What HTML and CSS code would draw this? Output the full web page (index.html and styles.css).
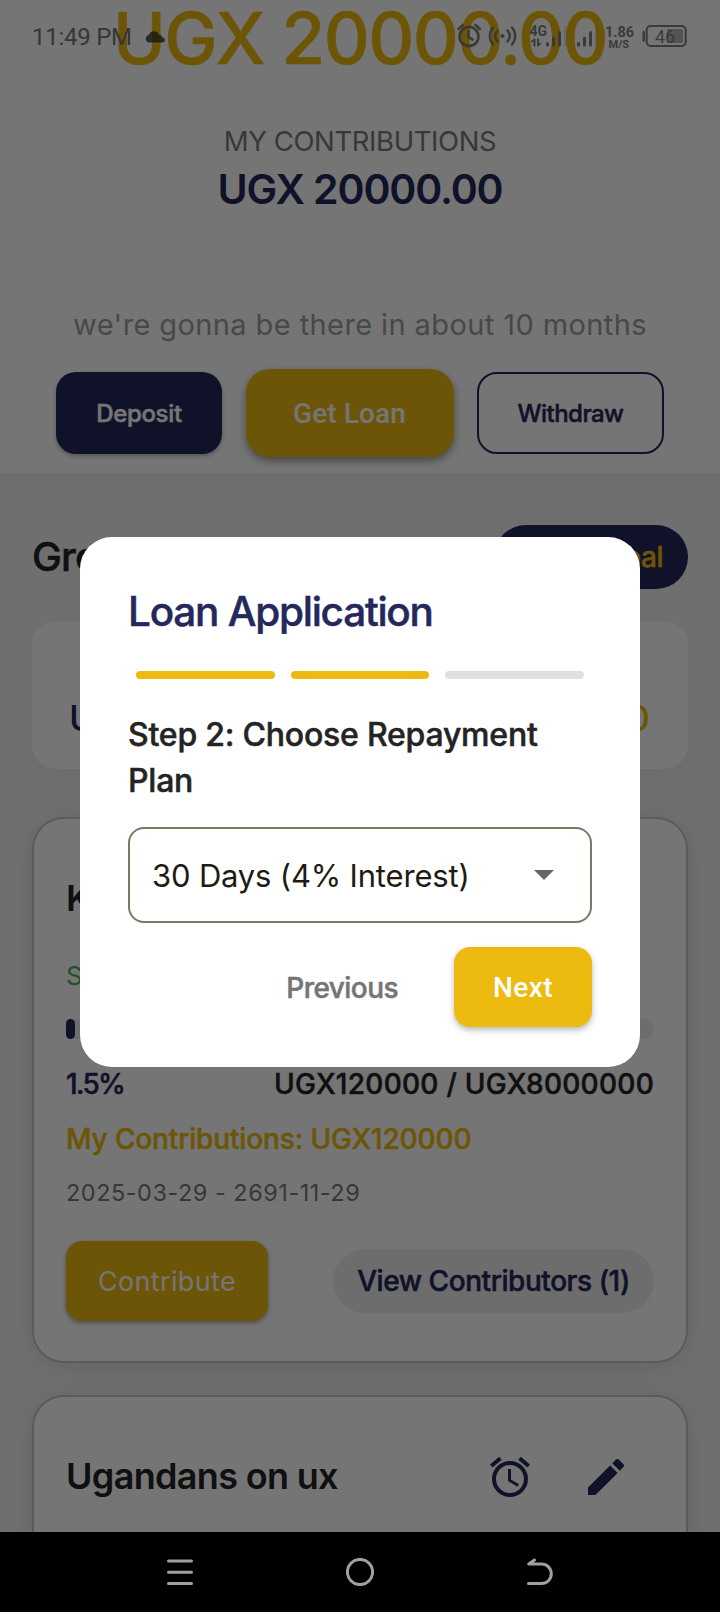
FILE: index.html
```html
<!DOCTYPE html>
<html lang="en">
<head>
<meta charset="utf-8">
<title>Loan Application</title>
<link rel="stylesheet" href="styles.css">
</head>
<body>
<div class="phone">
  <main class="screen">
    <section class="summary">
      <div class="total">UGX 20000.00</div>
      <div class="caption">MY CONTRIBUTIONS</div>
      <div class="mine">UGX 20000.00</div>
      <div class="hint">we're gonna be there in about 10 months</div>
      <div class="actions">
        <button class="btn deposit">Deposit</button>
        <button class="btn loan">Get Loan</button>
        <button class="btn withdraw">Withdraw</button>
      </div>
    </section>
    <div class="strip"></div>
    <section class="goals">
      <header class="goals-head">
        <h2>Group</h2>
        <button class="new-goal">Goal</button>
      </header>
      <div class="totals"><span class="saved">UGX</span><span class="target">0</span></div>
      <article class="card">
        <div class="card-title"><h3>K</h3></div>
        <div class="state">S</div>
        <div class="track"><div class="fill"></div></div>
        <div class="row"><span class="percent">1.5%</span><span class="amount">UGX120000 / UGX8000000</span></div>
        <div class="own">My Contributions: UGX120000</div>
        <div class="dates">2025-03-29 - 2691-11-29</div>
        <div class="card-actions">
          <button class="contribute">Contribute</button>
          <button class="viewers">View Contributors (1)</button>
        </div>
      </article>
      <article class="card">
        <div class="card-title">
          <h3>Ugandans on ux</h3>
          <div class="tools">
            <svg width="48" height="48" viewBox="0 0 24 24" fill="currentColor"><path d="M22 5.72l-4.6-3.86-1.29 1.53 4.6 3.86L22 5.72zM7.88 3.39L6.6 1.86 2 5.71l1.29 1.53 4.59-3.85zM12.5 8H11v6l4.75 2.85.75-1.23-4-2.37V8zM12 4c-4.97 0-9 4.03-9 9s4.02 9 9 9c4.97 0 9-4.03 9-9s-4.03-9-9-9zm0 16c-3.87 0-7-3.13-7-7s3.13-7 7-7 7 3.13 7 7-3.13 7-7 7z"/></svg>
            <svg width="48" height="48" viewBox="0 0 24 24" fill="currentColor"><path d="M3 17.25V21h3.75L17.81 9.94l-3.75-3.75L3 17.25zM20.71 7.04c.39-.39.39-1.02 0-1.41l-2.34-2.34c-.39-.39-1.02-.39-1.41 0l-1.83 1.83 3.75 3.75 1.83-1.83z"/></svg>
          </div>
        </div>
      </article>
    </section>
  </main>

  <div class="scrim">
    <div class="dialog">
      <h1>Loan Application</h1>
      <div class="steps"><i class="done"></i><i class="done"></i><i></i></div>
      <p class="step-label">Step 2: Choose Repayment Plan</p>
      <div class="select"><span>30 Days (4% Interest)</span><i class="arrow"></i></div>
      <div class="dialog-actions">
        <button class="previous">Previous</button>
        <button class="next">Next</button>
      </div>
    </div>
  </div>

  <div class="status">
    <span class="clock">11:49 PM</span>
    <svg class="cloud" width="20" height="12" viewBox="0 0 20 12"><path d="M4 11.5a3.8 3.8 0 0 1-.4-7.4C4.600 1.500 6.800.2 9 .2c2.500 0 4.300 1.500 4.900 3.500 2 0 3.200 1.100 3.500 2.700 1.600.3 2.500 1.400 2.500 2.700 0 1.500-1 2.400-2.400 2.400z"/></svg>
    <svg class="indicators" width="232" height="32" viewBox="456 20 232 32">
      <g fill="none" stroke="currentColor" stroke-width="2.600" stroke-linecap="round">
        <circle cx="469" cy="36.500" r="9.500"/>
        <path d="M468.500 31.500v5.500l4 2.600M458.500 29l4.300-4M475.500 25l4.300 4"/>
        <path d="M497.500 30.500a7.500 7.500 0 0 0 0 10.800M493 27.500a13 13 0 0 0 0 17M507.500 30.500a7.500 7.500 0 0 1 0 10.800M512 27.500a13 13 0 0 1 0 17" stroke-width="2.400"/>
      </g>
      <circle cx="502.500" cy="36" r="2"/>
      <text x="529.500" y="36" class="net">4G</text>
      <path d="M533.500 46.500h2V38.800h-1.500l-3.500 2.700 1 1 2-1.200zM537 38.800h2v5l1.600-1.200 1 1-3.400 2.900H537z"/>
      <g><rect x="546" y="42" width="3" height="4.500" rx="1.500"/><rect x="552" y="36.500" width="3" height="10" rx="1.500"/><rect x="558" y="31" width="3" height="15.500" rx="1.500"/><rect x="564" y="26" width="3" height="20.500" rx="1.500" opacity=".22"/></g>
      <g><rect x="577" y="42" width="3" height="4.500" rx="1.500"/><rect x="583" y="36.500" width="3" height="10" rx="1.500"/><rect x="589" y="31" width="3" height="15.500" rx="1.500"/><rect x="595" y="26" width="3" height="20.500" rx="1.500" opacity=".22"/></g>
      <text x="605" y="37" class="speed">1.86</text>
      <text x="608.500" y="47.500" class="unit">M/S</text>
      <rect x="642.500" y="31" width="2.500" height="10.500" rx="1"/>
      <rect x="646.700" y="26" width="39" height="20" rx="4" fill="none" stroke="currentColor" stroke-width="2"/>
      <rect x="667" y="29" width="16" height="14" rx="1" fill="#525252"/>
      <text x="655" y="42.500" class="level">46</text>
    </svg>
  </div>

  <nav class="navbar">
    <svg width="28" height="28" viewBox="0 0 28 28"><path d="M2.500 3h23M2.500 14.300h23M2.500 25.600h23"/></svg>
    <svg width="28" height="28" viewBox="0 0 28 28"><circle cx="14" cy="14" r="12.600"/></svg>
    <svg width="28" height="28" viewBox="0 0 28 28"><path d="M8.500 2L2.800 6H15.500a9.800 9.800 0 0 1 0 19.600H2.500"/></svg>
  </nav>
</div>
</body>
</html>
```
FILE: styles.css
```css
* { box-sizing: border-box; }
body { margin: 0; font-family: Inter, "Liberation Sans", sans-serif; color: #242424; }
h1, h2, h3, p { margin: 0; font-weight: 600; }
button { border: 0; padding: 0; font: inherit; white-space: nowrap; }
.phone { position: relative; width: 720px; height: 1612px; overflow: hidden; background: #000; }
.screen { height: 1532px; overflow: hidden; background: #f2f2f2; }

/* Medium weight thickened slightly */
.total, .deposit, .withdraw, .new-goal, .goals-head h2, .row, .own, .viewers, .dialog h1, .step-label, .previous { -webkit-text-stroke: .5px currentColor; }

.summary { height: 473px; background: #fff; text-align: center; white-space: nowrap; }
.total { height: 76px; line-height: 76px; font-size: 71.5px; font-weight: 500; letter-spacing: -1.65px; color: #edba10; }
.caption { margin-top: 45px; height: 40px; line-height: 40px; font-size: 27.5px; letter-spacing: -.4px; color: #7a7a7a; }
.mine { margin-top: 3px; height: 50px; line-height: 50px; font-size: 41px; font-weight: 600; letter-spacing: -1.15px; color: #24285b; }
.hint { margin-top: 91px; height: 40px; line-height: 40px; font-size: 29px; letter-spacing: .4px; color: #9e9e9e; }
.actions { margin: 24px 56px 0; height: 88px; display: flex; align-items: center; justify-content: space-between; }
.btn { height: 82px; border-radius: 20px; font-size: 24px; font-weight: 500; }
.deposit { width: 166px; background: #24285b; color: #fff; letter-spacing: -.35px; box-shadow: 0 2px 4px rgba(0,0,0,.3); }
.loan { width: 208px; height: 88px; border-radius: 24px; background: #edba10; color: #fff; font: 500 28px Roboto, sans-serif; letter-spacing: .1px; box-shadow: 0 4px 8px rgba(0,0,0,.4); }
.withdraw { width: 187px; background: #fff; border: 2px solid #24285b; color: #24285b; letter-spacing: -.55px; }
.strip { height: 19px; background: #ebeff3; }

.goals { padding: 33px 32px 0; }
.goals-head { height: 64px; display: flex; align-items: center; justify-content: space-between; }
.goals-head h2 { font-size: 40px; font-weight: 500; letter-spacing: -.8px; line-height: 62px; }
.new-goal { width: 194px; height: 64px; padding-right: 25px; border-radius: 32px; background: #24285b; color: #edba10; font-size: 28px; font-weight: 500; letter-spacing: -.5px; text-align: right; }
.totals { margin-top: 32px; height: 148px; padding: 46px 38px 0 37px; border-radius: 24px; background: #fff; display: flex; justify-content: space-between; font-size: 36px; font-weight: 500; box-shadow: 0 4px 20px rgba(0,0,0,.04); }
.totals span { height: 102px; line-height: 102px; }
.saved { color: #24285b; }
.target { color: #edba10; }
.card { margin-top: 48px; height: 546px; padding: 46px 32px 40px; border: 2px solid #c6c5cf; border-radius: 32px; background: #fff; box-shadow: 0 4px 24px rgba(0,0,0,.1); }
.card + .card { margin-top: 32px; }
.card-title { height: 67px; display: flex; align-items: center; justify-content: space-between; }
.card-title h3 { padding-bottom: 2px; font-size: 36px; font-weight: 600; letter-spacing: -.67px; }
.tools { display: flex; gap: 48px; margin-right: 24px; color: #24285b; }
.tools svg { display: block; }
.state { margin-top: 24px; height: 39px; line-height: 39px; font-size: 26px; color: #4caf50; }
.track { margin-top: 24px; height: 20px; border-radius: 10px; background: #eee; }
.fill { width: 9px; height: 20px; border-radius: 4.5px; background: #24285b; }
.row { margin-top: 25px; height: 40px; line-height: 40px; display: flex; justify-content: space-between; font-size: 28px; font-weight: 500; }
.percent { color: #24285b; letter-spacing: -1.7px; }
.amount { letter-spacing: .27px; }
.own { margin-top: 15px; height: 40px; line-height: 41px; font-size: 28px; font-weight: 500; letter-spacing: -.14px; color: #edba10; }
.dates { margin-top: 14px; height: 40px; line-height: 40px; font-size: 23.5px; letter-spacing: .5px; color: #7a7a7a; }
.card-actions { margin-top: 28px; display: flex; align-items: center; justify-content: space-between; }
.contribute { width: 202px; height: 80px; border-radius: 16px; background: #edba10; color: #fff; font-size: 27px; font-weight: 400; letter-spacing: .35px; box-shadow: 0 2px 5px rgba(0,0,0,.35); }
.viewers { width: 321px; height: 64px; border-radius: 32px; background: #eee; color: #24285b; font-size: 28px; font-weight: 500; letter-spacing: -.43px; }

.scrim { position: absolute; left: 0; top: 0; width: 720px; height: 1532px; padding: 537px 80px 0; background: rgba(0,0,0,.54); }
.dialog { height: 530px; padding: 49px 48px 48px; border-radius: 32px; background: #fff; }
.dialog h1 { height: 51px; line-height: 52px; font-size: 40.5px; font-weight: 500; letter-spacing: -1.25px; color: #24285b; white-space: nowrap; }
.steps { margin: 34px 8px 0; display: flex; gap: 16px; }
.steps i { flex: 1; height: 8px; border-radius: 4px; background: #e0e0e0; }
.steps .done { background: #edba10; }
.step-label { margin-top: 33px; font-size: 32px; line-height: 46px; font-weight: 500; letter-spacing: -.22px; }
.select { margin-top: 23px; height: 96px; padding: 0 36px 0 22px; border: 2px solid #7f7667; border-radius: 16px; display: flex; align-items: center; justify-content: space-between; font-size: 31px; letter-spacing: -.18px; color: #1f1b13; }
.arrow { border: 10px solid transparent; border-top-color: #666; border-bottom: 0; }
.dialog-actions { margin-top: 24px; display: flex; align-items: center; justify-content: flex-end; gap: 56px; }
.previous { padding-top: 1px; background: none; color: #757575; font-size: 28px; font-weight: 500; letter-spacing: -.55px; }
.next { width: 138px; height: 80px; border-radius: 16px; background: #edba10; color: #fff; font: 500 28px Roboto, sans-serif; letter-spacing: .4px; box-shadow: 0 3px 6px rgba(0,0,0,.28); }

.status { position: absolute; left: 0; top: 0; width: 720px; height: 74px; padding: 0 32px; display: flex; align-items: center; color: #363636; }
.clock { font: 400 24px/74px Roboto, sans-serif; letter-spacing: -.25px; }
.cloud { margin-left: 13px; opacity: .75; fill: #111; }
.indicators { margin-left: auto; margin-bottom: 2px; fill: currentColor; opacity: .92; }
.net { font: 700 14px Roboto, sans-serif; }
.speed { font: 700 14.5px Roboto, sans-serif; }
.unit { font: 700 11px Roboto, sans-serif; }
.level { font: 400 18px Roboto, sans-serif; }

.navbar { height: 80px; padding: 0 166px; display: flex; align-items: center; justify-content: space-between; }
.navbar svg { fill: none; stroke: #a0a0a0; stroke-width: 3; stroke-linecap: round; stroke-linejoin: round; }
```
